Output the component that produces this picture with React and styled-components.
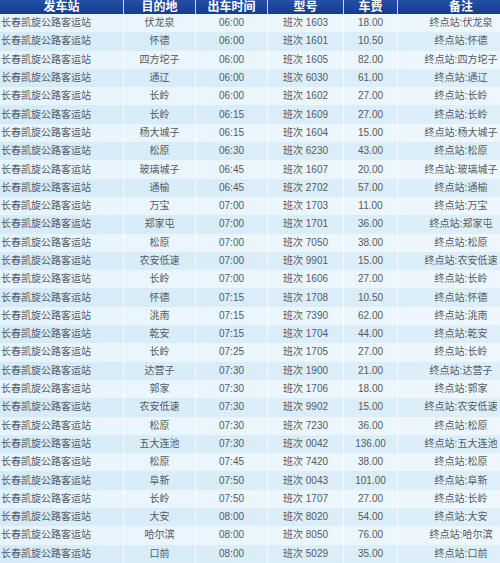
import React from "react";
import styled, { createGlobalStyle } from "styled-components";

const GlobalStyle = createGlobalStyle`
  html, body {
    margin: 0;
    padding: 0;
    overflow: hidden;
    background: #ffffff;
  }
`;

const rows = [
  ["伏龙泉", "06:00", "1603", "18.00"],
  ["怀德", "06:00", "1601", "10.50"],
  ["四方坨子", "06:00", "1605", "82.00"],
  ["通辽", "06:00", "6030", "61.00"],
  ["长岭", "06:00", "1602", "27.00"],
  ["长岭", "06:15", "1609", "27.00"],
  ["杨大城子", "06:15", "1604", "15.00"],
  ["松原", "06:30", "6230", "43.00"],
  ["玻璃城子", "06:45", "1607", "20.00"],
  ["通榆", "06:45", "2702", "57.00"],
  ["万宝", "07:00", "1703", "11.00"],
  ["郑家屯", "07:00", "1701", "36.00"],
  ["松原", "07:00", "7050", "38.00"],
  ["农安低速", "07:00", "9901", "15.00"],
  ["长岭", "07:00", "1606", "27.00"],
  ["怀德", "07:15", "1708", "10.50"],
  ["洮南", "07:15", "7390", "62.00"],
  ["乾安", "07:15", "1704", "44.00"],
  ["长岭", "07:25", "1705", "27.00"],
  ["达营子", "07:30", "1900", "21.00"],
  ["郭家", "07:30", "1706", "18.00"],
  ["农安低速", "07:30", "9902", "15.00"],
  ["松原", "07:30", "7230", "36.00"],
  ["五大连池", "07:30", "0042", "136.00"],
  ["松原", "07:45", "7420", "38.00"],
  ["阜新", "07:50", "0043", "101.00"],
  ["长岭", "07:50", "1707", "27.00"],
  ["大安", "08:00", "8020", "54.00"],
  ["哈尔滨", "08:00", "8050", "76.00"],
  ["口前", "08:00", "5029", "35.00"]
];

const headers = ["发车站", "目的地", "出车时间", "型号", "车费", "备注"];

const COLS = "124px 72px 72px 76px 54px 126px";

const Table = styled.div`
  width: 524px;
  display: flex;
  flex-direction: column;
  font-family: "Liberation Sans", "Noto Sans CJK SC", sans-serif;
`;

const HeadRow = styled.div`
  display: grid;
  grid-template-columns: ${COLS};
  height: 14px;
  background: linear-gradient(#2450a6, #163c8c);
`;

const HeadCell = styled.div`
  display: flex;
  align-items: center;
  justify-content: center;
  color: #ffffff;
  font-size: 12px;
  font-weight: bold;
  border-right: 1px solid #c8d8f0;
  line-height: 1;
  overflow: hidden;
  white-space: nowrap;
  &:last-child {
    border-right: none;
  }
`;

const Row = styled.div`
  display: grid;
  grid-template-columns: ${COLS};
  height: 18.3px;
  background: ${({ $alt }) =>
    $alt
      ? "linear-gradient(90deg, #d6ebf8, #deeffa)"
      : "linear-gradient(90deg, #e8f4fc, #eef7fd)"};
`;

const Cell = styled.div`
  display: flex;
  align-items: center;
  justify-content: ${({ $left }) => ($left ? "flex-start" : "center")};
  padding-left: ${({ $left }) => ($left ? "1px" : "0")};
  color: #555a60;
  font-size: 10px;
  line-height: 1;
  white-space: nowrap;
  overflow: visible;
  border-right: 1px solid rgba(255, 255, 255, 0.7);
  &:last-child {
    border-right: none;
  }
`;

export default function App() {
  return (
    <>
      <GlobalStyle />
      <Table>
        <HeadRow>
          {headers.map(h => (
            <HeadCell key={h}>{h}</HeadCell>
          ))}
        </HeadRow>
        {rows.map(([dest, time, no, fare], i) => (
          <Row key={i} $alt={i % 2 === 1}>
            <Cell $left>长春凯旋公路客运站</Cell>
            <Cell>{dest}</Cell>
            <Cell>{time}</Cell>
            <Cell>班次 {no}</Cell>
            <Cell>{fare}</Cell>
            <Cell>终点站:{dest}</Cell>
          </Row>
        ))}
      </Table>
    </>
  );
}
